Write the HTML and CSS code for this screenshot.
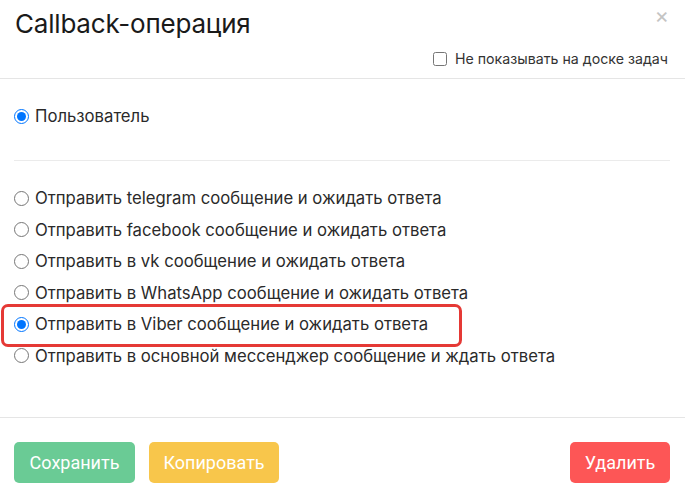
FILE: index.html
```html
<!DOCTYPE html>
<html lang="ru">
<head>
<meta charset="utf-8">
<link rel="stylesheet" href="styles.css">
</head>
<body>
<div class="modal">
  <div class="modal-header">
    <div class="title-row">
      <h1 class="title">Callback-операция</h1>
      <span class="close">×</span>
    </div>
    <label class="hide-row"><input type="checkbox" class="check"> Не показывать на доске задач</label>
  </div>
  <div class="modal-body">
    <div class="user-row">
      <label class="opt"><input type="radio" name="a" class="radio" checked> Пользователь</label>
    </div>
    <div class="options">
      <label class="opt"><input type="radio" name="b" class="radio"> Отправить telegram сообщение и ожидать ответа</label>
      <label class="opt"><input type="radio" name="b" class="radio"> Отправить facebook сообщение и ожидать ответа</label>
      <label class="opt"><input type="radio" name="b" class="radio"> Отправить в vk сообщение и ожидать ответа</label>
      <label class="opt"><input type="radio" name="b" class="radio"> Отправить в WhatsApp сообщение и ожидать ответа</label>
      <label class="opt highlighted"><input type="radio" name="b" class="radio" checked> Отправить в Viber сообщение и ожидать ответа</label>
      <label class="opt"><input type="radio" name="b" class="radio"> Отправить в основной мессенджер сообщение и ждать ответа</label>
    </div>
  </div>
  <div class="modal-footer">
    <button class="btn btn-green">Сохранить</button>
    <button class="btn btn-yellow">Копировать</button>
    <button class="btn btn-red">Удалить</button>
  </div>
</div>
</body>
</html>
```
FILE: styles.css
```css
* { box-sizing: border-box; }
body {
  margin: 0;
  background: #fff;
  font-family: Inter, "Noto Sans", sans-serif;
  color: #222;
}
.modal {
  width: 685px;
  height: 496px;
  display: flex;
  flex-direction: column;
}
.modal-header {
  height: 79px;
  border-bottom: 1px solid #e5e5e5;
  padding: 8px 17px 0 15px;
  display: flex;
  flex-direction: column;
}
.title-row {
  display: flex;
  justify-content: space-between;
  align-items: flex-start;
}
.title {
  margin: 0;
  font-size: 26px;
  font-weight: 400;
  line-height: 32px;
  color: #1a1a1a;
  letter-spacing: -0.2px;
}
.close {
  color: #c4c4c4;
  font-size: 22px;
  line-height: 16px;
  margin-top: -1px;
  margin-right: -1px;
}
.hide-row {
  align-self: flex-end;
  margin-top: 10px;
  display: flex;
  align-items: center;
  font-size: 14.2px;
  color: #333;
}
.check {
  width: 14px;
  height: 14px;
  margin: 0 8px 0 0;
}
.modal-body {
  padding: 0 15px 0 14px;
  flex: 1;
}
.user-row {
  padding: 27px 0 34px;
  border-bottom: 1px solid #ebebeb;
}
.opt {
  display: flex;
  align-items: center;
  height: 20px;
  font-size: 16.7px;
  color: #2a2a2a;
  position: relative;
}
.radio {
  width: 15px;
  height: 15px;
  margin: 0 6px 0 0;
  accent-color: #0075ff;
}
.options {
  padding-top: 27px;
  display: flex;
  flex-direction: column;
  gap: 11.6px;
}
.highlighted::after {
  content: "";
  position: absolute;
  left: -13px;
  top: -10px;
  width: 455px;
  height: 37px;
  border: 3px solid #e53935;
  border-radius: 7px;
}
.modal-footer {
  height: 79px;
  border-top: 1px solid #e5e5e5;
  padding: 24px 15px 0 14px;
  display: flex;
  align-items: flex-start;
  gap: 14px;
}
.btn {
  height: 41px;
  border: none;
  border-radius: 5px;
  color: #fff;
  font-family: Roboto, "Liberation Sans", sans-serif;
  font-size: 18px;
  padding: 0;
}
.btn-green { background: #6acb95; width: 121px; }
.btn-yellow { background: #f8c64b; width: 130px; }
.btn-red { background: #fd5656; width: 100px; margin-left: auto; }
```
